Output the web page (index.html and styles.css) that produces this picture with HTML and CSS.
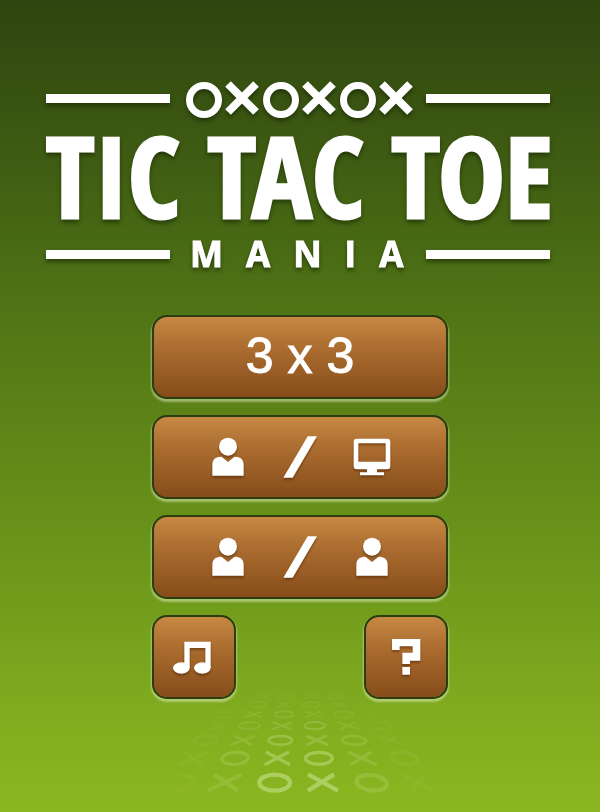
FILE: index.html
```html
<!DOCTYPE html>
<html lang="en">
<head>
<meta charset="utf-8">
<meta name="viewport" content="width=device-width, initial-scale=1">
<title>Tic Tac Toe Mania</title>
<link rel="stylesheet" href="styles.css">
</head>
<body>
<svg class="sprite" aria-hidden="true">
  <symbol id="user" viewBox="0 0 120 126">
    <circle cx="60" cy="32" r="27"/>
    <path d="M13 119V86C13 71 22 63 37 62Q42 62 45 66L60 78L75 66Q78 62 83 62C98 63 107 71 107 86V119Z"/>
  </symbol>
  <symbol id="slash" viewBox="0 0 120 126">
    <path d="M83 1H111L38 125H10Z"/>
  </symbol>
  <symbol id="screen" viewBox="0 0 120 126">
    <path fill-rule="evenodd" d="M15 8H105Q115 8 115 18V90Q115 100 105 100H75V109H96V118H24V109H45V100H15Q5 100 5 90V18Q5 8 15 8ZM19 22V77H101V22Z"/>
  </symbol>
  <symbol id="music" viewBox="0 0 120 126" overflow="visible">
    <path d="M31 17H110V97H94V36H47V97H31Z"/>
    <ellipse cx="22" cy="96" rx="25" ry="17"/>
    <ellipse cx="85" cy="96" rx="25" ry="17"/>
  </symbol>
  <symbol id="question" viewBox="0 0 120 126">
    <path d="M18 9H103V74H72V84H49V50H80V31H41V42H18ZM49 93H72V116H49Z"/>
  </symbol>
</svg>
<main class="game">
  <header class="brand">
    <div class="band">
      <svg class="marks" viewBox="0 0 228 40" aria-hidden="true">
        <g fill="none" stroke="#fff" stroke-width="7">
          <circle cx="18" cy="22" r="14.5"/><circle cx="95" cy="22" r="14.5"/><circle cx="172" cy="22" r="14.5"/>
        </g>
        <path fill="none" stroke="#fff" stroke-width="8" d="M42 6L70 34M70 6L42 34M119 6L147 34M147 6L119 34M196 6L224 34M224 6L196 34"/>
      </svg>
    </div>
    <h1 class="title">TIC TAC TOE</h1>
    <div class="band"><p class="subtitle">MANIA</p></div>
  </header>
  <nav class="menu" aria-label="Game menu">
    <button class="key key-text" type="button">3 x 3</button>
    <button class="key" type="button" aria-label="Player against computer">
      <svg class="icon"><use href="#user"/></svg><svg class="icon"><use href="#slash"/></svg><svg class="icon"><use href="#screen"/></svg>
    </button>
    <button class="key" type="button" aria-label="Player against player">
      <svg class="icon"><use href="#user"/></svg><svg class="icon"><use href="#slash"/></svg><svg class="icon"><use href="#user"/></svg>
    </button>
    <div class="tools">
      <button class="key key-small" type="button" aria-label="Music"><svg class="icon"><use href="#music"/></svg></button>
      <button class="key key-small" type="button" aria-label="Help"><svg class="icon"><use href="#question"/></svg></button>
    </div>
  </nav>
  <svg class="floor" viewBox="0 0 900 366" aria-hidden="true">
    <g fill="none" stroke="#e4f5ba">
      <g stroke-width="13">
        <ellipse cx="374" cy="278" rx="46" ry="24" opacity=".42"/>
        <path d="M474 253L564 302M552 253L474 302" opacity=".42"/>
        <ellipse cx="665" cy="278" rx="46" ry="23" transform="rotate(7 665 278)" opacity=".16"/>
        <path d="M192 253L264 302M276 253L174 302" opacity=".14"/>
        <path d="M760 254L850 302M825 254L782 302" opacity=".05"/>
        <path d="M95 256C150 256 140 292 80 300" opacity=".05"/>
      </g>
      <g stroke-width="10">
        <path d="M348 186L420 224M417 186L344 224" opacity=".32"/>
        <ellipse cx="507" cy="205" rx="40" ry="18" opacity=".34"/>
        <ellipse cx="255" cy="205" rx="40" ry="18" transform="rotate(-4 255 205)" opacity=".17"/>
        <path d="M594 186L680 224M665 186L602 224" opacity=".16"/>
        <ellipse cx="763" cy="205" rx="40" ry="17" transform="rotate(8 763 205)" opacity=".07"/>
        <path d="M102 187L160 223M175 187L90 223" opacity=".06"/>
      </g>
      <g stroke-width="8">
        <ellipse cx="391" cy="151" rx="35" ry="13" opacity=".26"/>
        <path d="M468 137L535 165M530 137L470 165" opacity=".2"/>
        <path d="M252 137L306 165M316 137L240 165" opacity=".13"/>
        <ellipse cx="612" cy="151" rx="36" ry="13" transform="rotate(4 612 151)" opacity=".15"/>
        <ellipse cx="168" cy="151" rx="36" ry="13" transform="rotate(-5 168 151)" opacity=".06"/>
        <path d="M686 137L762 165M740 137L700 165" opacity=".05"/>
      </g>
      <g stroke-width="6">
        <path d="M368 96L426 119M426 96L364 119" opacity=".17"/>
        <ellipse cx="494" cy="107" rx="31" ry="11" opacity=".19"/>
        <ellipse cx="298" cy="107" rx="31" ry="11" opacity=".11"/>
        <path d="M563 97L628 119M616 97L568 119" opacity=".11"/>
        <ellipse cx="692" cy="107" rx="31" ry="11" opacity=".05"/>
        <path d="M180 97L222 119M232 97L178 119" opacity=".05"/>
      </g>
      <g stroke-width="5">
        <ellipse cx="402" cy="73" rx="29" ry="9" opacity=".14"/>
        <path d="M464 64L517 82M512 64L464 82M288 64L336 82M338 64L282 82" opacity=".11"/>
        <ellipse cx="580" cy="73" rx="29" ry="9" opacity=".09"/>
        <ellipse cx="222" cy="73" rx="28" ry="9" opacity=".05"/>
        <path d="M644 64L690 82M684 64L650 82" opacity=".04"/>
      </g>
      <g stroke-width="4" opacity=".08">
        <path d="M384 37L420 51M420 37L382 51M548 37L586 51M584 37L552 51"/>
        <ellipse cx="484" cy="44" rx="26" ry="8"/><ellipse cx="324" cy="44" rx="26" ry="8"/>
      </g>
      <g stroke-width="4" opacity=".04">
        <ellipse cx="410" cy="19" rx="24" ry="6"/><ellipse cx="556" cy="19" rx="24" ry="6"/>
        <path d="M464 14L502 25M500 14L464 25M320 14L356 25M356 14L320 25"/>
      </g>
    </g>
  </svg>
</main>
</body>
</html>
```
FILE: styles.css
```css
* { box-sizing: border-box; }

body {
  margin: 0;
  font-family: "Liberation Sans", Arial, sans-serif;
  color: #fff;
}

.sprite { display: none; }

.game {
  min-height: 100vh;
  padding: 78px 16px 0;
  display: flex;
  flex-direction: column;
  align-items: center;
  overflow: hidden;
  background: linear-gradient(#2f450f 0%, #3a5512 14%, #507415 38%, #719c1b 74%, #7faa1f 86%, #8ab720 100%);
}

.brand {
  width: 100%;
  max-width: 504px;
  margin-right: 4px;
  display: flex;
  flex-direction: column;
  filter: drop-shadow(0 3px 2px rgba(20, 35, 0, 0.6));
}

.band {
  display: flex;
  align-items: center;
}

.band::before,
.band::after {
  content: "";
  flex: 1;
  height: 9px;
  background: #fff;
}

.marks {
  flex: none;
  width: 228px;
  height: 40px;
  margin: 0 12px 0 16px;
}

.title {
  margin: 0;
  padding-bottom: 4px;
  font: 700 112px/114px "Open Sans Condensed", "Roboto Condensed", sans-serif;
  text-align: center;
  white-space: nowrap;
  -webkit-text-stroke: 3px #fff;
}

.subtitle {
  flex: none;
  width: 256px;
  margin: 0;
  padding-left: 20px;
  font: 700 35px/36px "Open Sans", sans-serif;
  letter-spacing: 23px;
  text-align: center;
  -webkit-text-stroke: 1px #fff;
}

.menu {
  width: 100%;
  max-width: 296px;
  margin-top: 43px;
  display: flex;
  flex-direction: column;
  gap: 16px;
}

.key {
  height: 84px;
  padding: 0;
  display: flex;
  align-items: center;
  justify-content: center;
  gap: 32px;
  border: 2px solid #2c3b10;
  border-radius: 15px;
  background: linear-gradient(#c68843, #a7692d 45%, #864d1a) padding-box;
  box-shadow: 0 2px 2px 1px rgba(225, 240, 190, 0.5);
  color: #fff;
  cursor: pointer;
}

.key-text {
  padding-bottom: 2px;
  font: 400 50px/60px "Liberation Sans", Arial, sans-serif;
  -webkit-text-stroke: 1px #fff;
}

.key-small { width: 84px; }

.tools {
  display: flex;
  justify-content: space-between;
}

.icon {
  width: 40px;
  height: 42px;
  fill: #fff;
  overflow: visible;
  filter: drop-shadow(0 2px 1px rgba(70, 30, 0, 0.5));
}

.floor {
  width: 300px;
  height: 122px;
  margin-top: -9px;
  pointer-events: none;
}
```
